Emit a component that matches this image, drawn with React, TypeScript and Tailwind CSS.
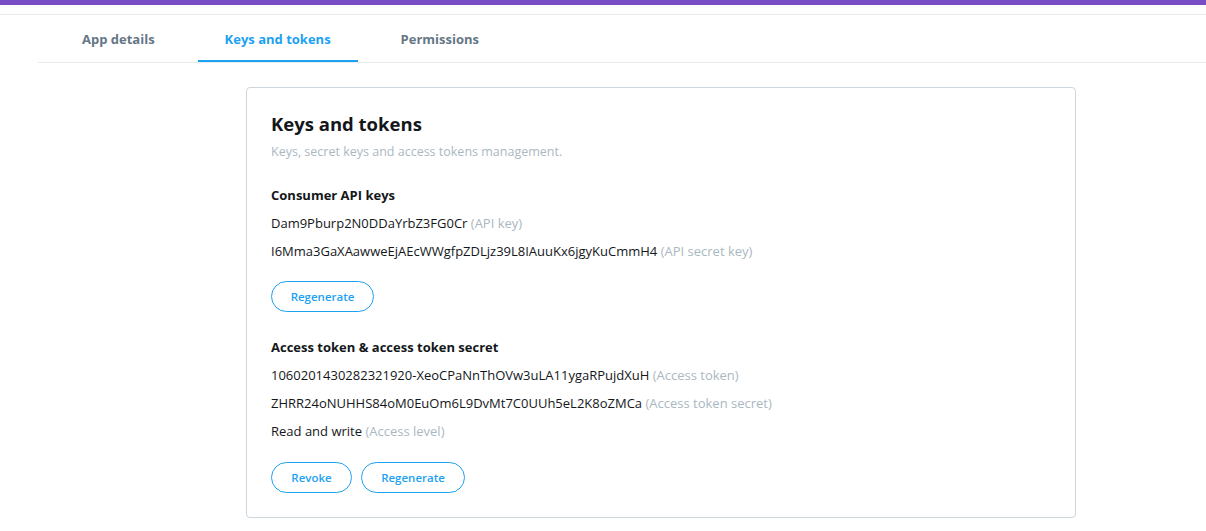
import React from 'react';

const tabs = ['App details', 'Keys and tokens', 'Permissions'];

const KeyLine: React.FC<{ value: string; label: string }> = ({ value, label }) => (
  <p className="h-[28px] leading-[28px] text-[13px] text-[#14171a]">
    {value} <span className="text-[#aab8c2]">({label})</span>
  </p>
);

const PillButton: React.FC<{ children: React.ReactNode; className?: string }> = ({ children, className }) => (
  <button
    className={`h-[31px] rounded-full border border-[#1da1f2] text-[11.5px] font-semibold text-[#1da1f2] bg-white ${className ?? ''}`}
  >
    {children}
  </button>
);

export default function App() {
  return (
    <div className="min-h-[531px] bg-white font-['Open_Sans','Noto_Sans',sans-serif]">
      {/* top bar */}
      <div className="h-[5px] bg-[#7b4dc4]" />
      <div className="h-[9px]" />
      <div className="border-t border-[#e6ecf0]" />

      {/* tabs */}
      <div className="ml-[38px] border-b border-[#e6ecf0]">
        <nav className="flex gap-[16px] pl-[17px]">
          {tabs.map((t) => {
            const active = t === 'Keys and tokens';
            return (
              <a
                key={t}
                className={`block h-[47px] px-[27px] pt-[15px] text-[13px] font-bold border-b-[2px] ${
                  active ? 'text-[#1da1f2] border-[#1da1f2]' : 'text-[#657786] border-transparent'
                }`}
              >
                {t}
              </a>
            );
          })}
        </nav>
      </div>

      {/* card */}
      <div className="ml-[246px] mt-[24px] w-[830px] rounded-[4px] border border-[#ccd6dd] px-[24px] pt-[24px] pb-[24px]">
        <h2 className="text-[18.5px] font-bold text-[#14171a] leading-[24px]">Keys and tokens</h2>
        <p className="mt-[7px] text-[12.5px] text-[#aab8c2]">Keys, secret keys and access tokens management.</p>

        <h3 className="mt-[23px] text-[13px] font-bold text-[#14171a] leading-[20px]">Consumer API keys</h3>
        <div className="mt-[4px]">
          <KeyLine value="Dam9Pburp2N0DDaYrbZ3FG0Cr" label="API key" />
          <KeyLine value="I6Mma3GaXAawweEjAEcWWgfpZDLjz39L8IAuuKx6jgyKuCmmH4" label="API secret key" />
        </div>
        <div className="mt-[16px]">
          <PillButton className="w-[103px]">Regenerate</PillButton>
        </div>

        <h3 className="mt-[25px] text-[13px] font-bold text-[#14171a] leading-[20px]">
          Access token &amp; access token secret
        </h3>
        <div className="mt-[4px]">
          <KeyLine value="1060201430282321920-XeoCPaNnThOVw3uLA11ygaRPujdXuH" label="Access token" />
          <KeyLine value="ZHRR24oNUHHS84oM0EuOm6L9DvMt7C0UUh5eL2K8oZMCa" label="Access token secret" />
          <KeyLine value="Read and write" label="Access level" />
        </div>
        <div className="mt-[17px] flex gap-[9px]">
          <PillButton className="w-[81px]">Revoke</PillButton>
          <PillButton className="w-[104px]">Regenerate</PillButton>
        </div>
      </div>
    </div>
  );
}
